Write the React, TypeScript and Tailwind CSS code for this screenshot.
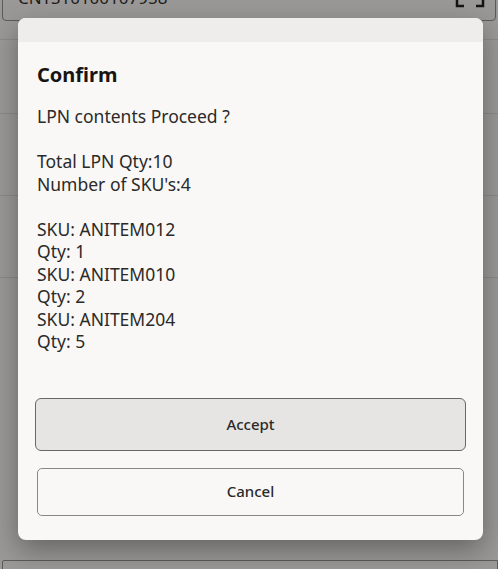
const LINES = [
  'LPN contents Proceed ?',
  '',
  'Total LPN Qty:10',
  "Number of SKU's:4",
  '',
  'SKU: ANITEM012',
  'Qty: 1',
  'SKU: ANITEM010',
  'Qty: 2',
  'SKU: ANITEM204',
  'Qty: 5',
];

function ScanIcon() {
  return (
    <svg width="30" height="30" viewBox="0 0 30 30" fill="none" stroke="#161513" strokeWidth="2.5">
      <path d="M2 9V2h7M21 2h7v7M2 21v7h7M21 28h7v-7" />
    </svg>
  );
}

export default function App() {
  return (
    <div
      className="relative w-[498px] h-[569px] overflow-hidden bg-[#9b9998]"
      style={{ fontFamily: '"Noto Sans", "Open Sans", sans-serif' }}
    >
      {/* page behind the dialog */}
      <div className="flex flex-col">
        <div className="mx-[2px] mt-[-26px] h-[47px] border border-[#5c5b5a] rounded-[4px] flex items-center justify-between pl-[15px] pr-[10px] text-[17px] text-[#1c1b1a]">
          <span>CNTS10100107958</span>
          <div className="mb-[9px]">
            <ScanIcon />
          </div>
        </div>
        <div className="h-[19px] border-b border-[#8c8a89]" />
        <div className="h-[74px] border-b border-[#8c8a89]" />
        <div className="h-[82px] border-b border-[#8c8a89]" />
        <div className="h-[82px] border-b border-[#8c8a89]" />
        <div className="h-[282px]" />
        <div className="ml-[2px] h-[40px] border border-[#5c5b5a] rounded-tl-[2px]" />
      </div>

      {/* dialog */}
      <div className="absolute left-[18px] top-[18px] w-[465px] h-[522px] rounded-[8px] bg-[#f9f8f7] overflow-hidden shadow-[0_10px_28px_rgba(0,0,0,0.35)] flex flex-col">
        <div className="h-[24px] bg-[#eeedeb]" />
        <div className="px-[19px] flex flex-col">
          <h2 className="mt-[21px] text-[20px] leading-[24px] font-bold text-[#161513]">Confirm</h2>
          <div className="mt-[18px] text-[17.5px] leading-[22.5px] text-[#2b2a28]">
            {LINES.map((line, i) => (
              <div key={i} className="h-[22.5px] whitespace-pre">
                {line}
              </div>
            ))}
          </div>
          <button className="mt-[45px] -mx-[2px] h-[53px] rounded-[6px] border border-[#6a6866] bg-[#e6e5e3] text-[15px] font-medium text-[#2b2a28]">
            Accept
          </button>
          <button className="mt-[17px] h-[48px] rounded-[5px] border border-[#8a8886] bg-transparent text-[15px] font-medium text-[#2b2a28]">
            Cancel
          </button>
        </div>
      </div>
    </div>
  );
}
